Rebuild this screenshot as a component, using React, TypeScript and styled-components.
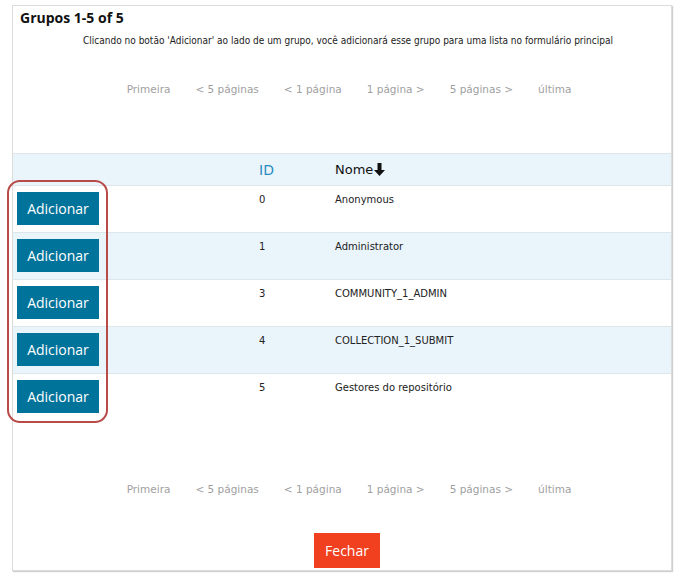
import React from "react";
import styled, { createGlobalStyle } from "styled-components";

const Global = createGlobalStyle`
  html, body { margin: 0; padding: 0; background: #fff; }
  body { font-family: "DejaVu Sans", Verdana, sans-serif; }
`;

const Page = styled.div`
  padding: 5px 8px 4px 12px;
  width: 680px;
  box-sizing: border-box;
`;

const Panel = styled.div`
  border: 1px solid #dcdcdc;
  box-shadow: 1px 1px 1px #cfcfcf;
  background: #fff;
  height: 566px;
  box-sizing: border-box;
  display: flex;
  flex-direction: column;
  position: relative;
`;

const Title = styled.h2`
  margin: 0;
  padding: 2px 0 0 7px;
  font-family: "Open Sans", sans-serif;
  font-weight: 700;
  font-size: 14px;
  line-height: 20px;
  color: #111;
`;

const Intro = styled.p`
  margin: 6px 0 0;
  padding-left: 12px;
  text-align: center;
  font-family: "DejaVu Sans Condensed", "DejaVu Sans", sans-serif;
  font-size: 10px;
  line-height: 14px;
  color: #222;
`;

const Pager = styled.nav<{ $top: number; $bottom: number }>`
  display: flex;
  justify-content: center;
  gap: 25px;
  margin: ${(p) => p.$top}px 0 ${(p) => p.$bottom}px 14px;
  font-size: 10.5px;
  line-height: 14px;
  color: #a0a0a0;
`;

const PagerItem = styled.span``;

const Table = styled.div`
  position: relative;
`;

const Row = styled.div<{ $alt?: boolean; $head?: boolean }>`
  display: grid;
  grid-template-columns: 246px 76px 1fr;
  height: ${(p) => (p.$head ? 32 : 47)}px;
  box-sizing: border-box;
  border-top: 1px solid #dfe6ea;
  background: ${(p) => (p.$alt ? "#eaf5fb" : "#fff")};
`;

const HeadCell = styled.div<{ $blue?: boolean }>`
  display: flex;
  align-items: center;
  font-family: "DejaVu Sans", Verdana, sans-serif;
  font-size: ${(p) => (p.$blue ? 14 : 13)}px;
  color: ${(p) => (p.$blue ? "#2a8dc0" : "#111")};
`;

const Cell = styled.div`
  padding-top: 7px;
  font-size: 10px;
  line-height: 14px;
  color: #222;
`;

const ActionCell = styled.div`
  padding: 6px 0 0 4px;
`;

const AddButton = styled.button`
  width: 82px;
  height: 33px;
  border: none;
  background: #00739a;
  color: #fff;
  font-family: "Open Sans", sans-serif;
  font-size: 14px;
  padding: 0;
  cursor: pointer;
`;

const Highlight = styled.div`
  position: absolute;
  left: -6px;
  top: 27px;
  width: 101px;
  height: 243px;
  border: 2.5px solid #b84a47;
  border-radius: 13px;
  box-sizing: border-box;
  pointer-events: none;
`;

const Footer = styled.div`
  display: flex;
  justify-content: center;
  padding-left: 10px;
`;

const CloseButton = styled.button`
  width: 66px;
  height: 35px;
  border: none;
  background: #f0401f;
  color: #fff;
  font-family: "Open Sans", sans-serif;
  font-size: 14px;
  padding: 0;
`;

const Arrow = () => (
  <svg width="11" height="13" viewBox="0 0 11 13" style={{ marginLeft: 1 }}>
    <path d="M3.5 0h4v7h3.5L5.5 13 0 7h3.5z" fill="#111" />
  </svg>
);

const pages = ["Primeira", "< 5 páginas", "< 1 página", "1 página >", "5 páginas >", "última"];

const groups = [
  { id: "0", name: "Anonymous" },
  { id: "1", name: "Administrator" },
  { id: "3", name: "COMMUNITY_1_ADMIN" },
  { id: "4", name: "COLLECTION_1_SUBMIT" },
  { id: "5", name: "Gestores do repositório" },
];

export default function App() {
  return (
    <Page>
      <Global />
      <Panel>
        <Title>Grupos 1-5 of 5</Title>
        <Intro>
          Clicando no botão 'Adicionar' ao lado de um grupo, você adicionará esse grupo para uma lista no formulário principal
        </Intro>
        <Pager $top={34} $bottom={57}>
          {pages.map((p) => (
            <PagerItem key={p}>{p}</PagerItem>
          ))}
        </Pager>
        <Table>
          <Row $alt $head>
            <div />
            <HeadCell $blue>ID</HeadCell>
            <HeadCell>
              Nome
              <Arrow />
            </HeadCell>
          </Row>
          {groups.map((g, i) => (
            <Row key={g.id} $alt={i % 2 === 1}>
              <ActionCell>
                <AddButton>Adicionar</AddButton>
              </ActionCell>
              <Cell>{g.id}</Cell>
              <Cell>{g.name}</Cell>
            </Row>
          ))}
          <Highlight />
        </Table>
        <Pager $top={62} $bottom={37}>
          {pages.map((p) => (
            <PagerItem key={p}>{p}</PagerItem>
          ))}
        </Pager>
        <Footer>
          <CloseButton>Fechar</CloseButton>
        </Footer>
      </Panel>
    </Page>
  );
}
